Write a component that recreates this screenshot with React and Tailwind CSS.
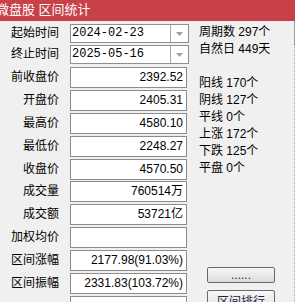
const ROWS = [
  { label: '前收盘价', value: '2392.52' },
  { label: '开盘价', value: '2405.31' },
  { label: '最高价', value: '4580.10' },
  { label: '最低价', value: '2248.27' },
  { label: '收盘价', value: '4570.50' },
  { label: '成交量', value: '760514万' },
  { label: '成交额', value: '53721亿' },
  { label: '加权均价', value: '' },
  { label: '区间涨幅', value: '2177.98(91.03%)' },
  { label: '区间振幅', value: '2331.83(103.72%)' },
  { label: '', value: '' },
];

const STATS = ['阳线 170个', '阴线 127个', '平线 0个', '上涨 172个', '下跌 125个', '平盘 0个'];

function DateCombo({ value }) {
  return (
    <div className="flex items-center gap-[11px]">
      <div className="w-[59px] text-right leading-[19px]">{value.label}</div>
      <div className="flex h-[19px] w-[119px] border border-[#8f8f8f] bg-white">
        <div className="flex-1 pl-[1px] font-['Liberation_Mono',monospace] text-[12px] leading-[17px]">{value.date}</div>
        <div className="flex w-[18px] items-center justify-center border-l border-[#a8a8a8]">
          <svg width="7" height="4" viewBox="0 0 7 4">
            <path d="M0 0h7L3.5 4z" fill="#a0a0a0" />
          </svg>
        </div>
      </div>
    </div>
  );
}

function WinButton({ children, tall }) {
  return (
    <div
      className={`flex w-[68px] justify-center rounded-[2px] border border-[#6a6a6a] bg-gradient-to-b from-[#f7f7f7] to-[#dcdcdc] text-[#1c1c48] ${
        tall ? 'h-[24px] items-start pt-[3px] leading-[16px]' : 'h-[16px] items-end leading-[14px]'
      }`}
    >
      {children}
    </div>
  );
}

export default function App() {
  return (
    <div className="h-[302px] w-[295px] overflow-hidden bg-[#f0f0f0] font-['Liberation_Sans','Noto_Sans_CJK_SC',sans-serif] text-[12px] text-black">
      {/* title bar */}
      <div className="h-[21px] whitespace-nowrap bg-[#c84048] text-[13px] leading-[20px] text-white">
        <span className="ml-[-4px]">微盘股 区间统计</span>
      </div>

      <div className="flex">
        {/* left column */}
        <div className="flex w-[199px] flex-col pt-[3px]">
          <div className="flex flex-col gap-[2px]">
            <DateCombo value={{ label: '起始时间', date: '2024-02-23' }} />
            <DateCombo value={{ label: '终止时间', date: '2025-05-16' }} />
          </div>
          <div className="mt-[3px] flex flex-col gap-[1.9px]">
            {ROWS.map((r, i) => (
              <div key={i} className="flex items-center gap-[11px]">
                <div className="w-[59px] text-right leading-[21px]">{r.label}</div>
                <div className="h-[21px] w-[117px] border border-[#8c8c8c] bg-white pr-[3px] text-right leading-[19px]">
                  {r.value}
                </div>
              </div>
            ))}
          </div>
        </div>

        {/* right column */}
        <div className="flex w-[95px] flex-col pt-[3px] leading-[17px]">
          <div>周期数 297个</div>
          <div>自然日 449天</div>
          <div className="mt-[17px] flex flex-col">
            {STATS.map(s => (
              <div key={s}>{s}</div>
            ))}
          </div>
          <div className="ml-[8px] mt-[90px] flex flex-col gap-[7px]">
            <WinButton>......</WinButton>
            <WinButton tall>区间排行</WinButton>
          </div>
        </div>

        {/* splitter edge */}
        <div className="flex w-[1px] flex-col">
          <div className="h-[24px] bg-[#9a9a9a]" />
          <div className="h-[257px] border-l border-dotted border-[#c9a878]" />
        </div>
      </div>
    </div>
  );
}
